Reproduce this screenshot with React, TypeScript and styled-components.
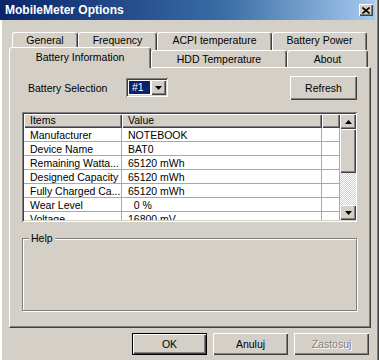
import styled, { createGlobalStyle, css } from "styled-components";

const GlobalStyle = createGlobalStyle`
  html, body {
    margin: 0;
    padding: 0;
    background: #d4d0c8;
  }
  body {
    font-family: "Liberation Sans", Arial, sans-serif;
    font-size: 10.5px;
    color: #000;
  }
  * {
    box-sizing: border-box;
  }
`;

const raised = css`
  background: #d4d0c8;
  box-shadow: inset 1px 1px #fff, inset -1px -1px #404040,
    inset -2px -2px #808080;
`;

const sunken = css`
  box-shadow: inset 1px 1px #808080, inset -1px -1px #fff,
    inset 2px 2px #404040, inset -2px -2px #d4d0c8;
`;

const Window = styled.div`
  width: 379px;
  height: 360px;
  overflow: hidden;
  display: flex;
  flex-direction: column;
  background: #d4d0c8;
  box-shadow: inset 2px 0 #fff, inset -1px 0 #404040, inset -2px 0 #808080;
`;

const TitleBar = styled.div`
  width: 375px;
  height: 20px;
  flex: none;
  display: flex;
  align-items: center;
  justify-content: space-between;
  padding: 0 2px 0 5px;
  background: linear-gradient(to right, #0a246a, #3a6ea5 60%, #a6caf0);
`;

const TitleText = styled.span`
  color: #fff;
  font-weight: bold;
  font-size: 12px;
`;

const CloseButton = styled.div`
  ${raised};
  width: 14px;
  height: 12px;
  display: flex;
  align-items: center;
  justify-content: center;
`;

const Body = styled.div`
  flex: 1;
  padding: 12px 8px 0 9px;
  display: flex;
  flex-direction: column;
`;

const TabRow = styled.div<{ $indent: number; $h: number }>`
  display: flex;
  align-items: flex-end;
  height: ${(p) => p.$h}px;
  padding-left: ${(p) => p.$indent}px;
`;

const Tab = styled.div<{ $w: number; $active?: boolean; $lift?: number }>`
  width: ${(p) => p.$w}px;
  height: 100%;
  flex: none;
  display: flex;
  align-items: center;
  justify-content: center;
  padding-bottom: ${(p) => p.$lift ?? 0}px;
  background: #d4d0c8;
  border-top: 1px solid #fff;
  border-left: 1px solid #fff;
  border-right: 1px solid #404040;
  border-radius: 3px 3px 0 0;
  box-shadow: inset -1px 0 #808080;
  white-space: nowrap;
  ${(p) =>
    p.$active &&
    css`
      height: 21px;
      margin-bottom: -1px;
      position: relative;
      z-index: 1;
      padding-bottom: 2px;
    `}
`;

const Page = styled.div`
  width: 362px;
  height: 261px;
  flex: none;
  border-top: 1px solid #fff;
  border-left: 1px solid #fff;
  border-right: 1px solid #404040;
  border-bottom: 1px solid #404040;
  box-shadow: inset -1px -1px #808080;
  padding: 8px 13px 0 12px;
  display: flex;
  flex-direction: column;
`;

const TopRow = styled.div`
  height: 24px;
  display: flex;
  align-items: center;
`;

const Label = styled.span`
  width: 104px;
  padding-left: 6px;
`;

const Combo = styled.div`
  ${sunken};
  background: #fff;
  width: 42px;
  height: 19px;
  padding: 2px;
  display: flex;
  margin-top: -1px;
`;

const ComboValue = styled.div`
  flex: 1;
  margin: 1px;
  background: #0a246a;
  color: #fff;
  padding-left: 3px;
  line-height: 13px;
`;

const ComboArrow = styled.div`
  ${raised};
  width: 15px;
  display: flex;
  align-items: center;
  justify-content: center;
`;

const Button = styled.div<{ $w: number; $h: number; $default?: boolean; $disabled?: boolean }>`
  ${raised};
  width: ${(p) => p.$w}px;
  height: ${(p) => p.$h}px;
  flex: none;
  display: flex;
  align-items: center;
  justify-content: center;
  ${(p) =>
    p.$default &&
    css`
      border: 1px solid #000;
    `}
  ${(p) =>
    p.$disabled &&
    css`
      color: #808080;
      text-shadow: 1px 1px #fff;
    `}
`;

const RefreshSpacer = styled.div`
  flex: 1;
`;

const List = styled.div`
  ${sunken};
  margin-top: 12px;
  height: 110px;
  padding: 2px 1px 2px 2px;
  display: flex;
  background: #fff;
`;

const Table = styled.div`
  flex: 1;
  overflow: hidden;
  display: flex;
  flex-direction: column;
`;

const HeadRow = styled.div`
  display: flex;
  height: 14px;
  flex: none;
`;

const HeadCell = styled.div<{ $w?: number }>`
  ${raised};
  ${(p) => (p.$w ? `width: ${p.$w}px; flex: none;` : "flex: 1;")}
  padding-left: 6px;
  line-height: 13px;
  white-space: nowrap;
`;

const Row = styled.div`
  display: flex;
  height: 14px;
  flex: none;
  border-bottom: 1px solid #a8a8a8;
`;

const Cell = styled.div<{ $w?: number }>`
  ${(p) => (p.$w ? `width: ${p.$w}px; flex: none;` : "flex: 1;")}
  border-right: 1px solid #a8a8a8;
  padding-left: 6px;
  line-height: 14px;
  white-space: pre;
  overflow: hidden;
`;

const Scrollbar = styled.div`
  width: 16px;
  flex: none;
  display: flex;
  flex-direction: column;
`;

const ScrollButton = styled.div`
  ${raised};
  height: 15px;
  flex: none;
  display: flex;
  align-items: center;
  justify-content: center;
`;

const Thumb = styled.div`
  ${raised};
  height: 44px;
  flex: none;
`;

const Track = styled.div`
  flex: 1;
  background: repeating-conic-gradient(#fff 0% 25%, #d4d0c8 0% 50%) 0 0 / 2px
    2px;
`;

const GroupBox = styled.div`
  position: relative;
  margin-top: 16px;
  height: 73px;
  border: 1px solid #808080;
  box-shadow: inset 1px 1px #fff, 1px 1px #fff;
`;

const GroupTitle = styled.span`
  position: absolute;
  top: -7px;
  left: 6px;
  padding: 0 2px;
  background: #d4d0c8;
  line-height: 13px;
`;

const ButtonBar = styled.div`
  display: flex;
  justify-content: flex-end;
  gap: 6px;
  margin-top: 5px;
  padding-right: 2px;
`;

const Triangle = ({ up }: { up?: boolean }) => (
  <svg width="7" height="4" viewBox="0 0 7 4">
    <polygon points={up ? "3.5,0 7,4 0,4" : "0,0 7,0 3.5,4"} fill="#000" />
  </svg>
);

const backTabs: [string, number][] = [
  ["General", 66],
  ["Frequency", 79],
  ["ACPI temperature", 115],
  ["Battery Power", 95],
];

const rows: [string, string][] = [
  ["Manufacturer", "NOTEBOOK"],
  ["Device Name", "BAT0"],
  ["Remaining Watta...", "65120 mWh"],
  ["Designed Capacity", "65120 mWh"],
  ["Fully Charged Ca...", "65120 mWh"],
  ["Wear Level", "  0 %"],
  ["Voltage", "16800 mV"],
];

export default function App() {
  return (
    <>
      <GlobalStyle />
      <Window>
        <TitleBar>
          <TitleText>MobileMeter Options</TitleText>
          <CloseButton>
            <svg width="8" height="7" viewBox="0 0 8 7">
              <path d="M0.5 0.5 L7.5 6.5 M7.5 0.5 L0.5 6.5" stroke="#000" strokeWidth="1.6" />
            </svg>
          </CloseButton>
        </TitleBar>
        <Body>
          <TabRow $indent={3} $h={18}>
            {backTabs.map(([name, w]) => (
              <Tab key={name} $w={w} $lift={3}>
                {name}
              </Tab>
            ))}
          </TabRow>
          <TabRow $indent={0} $h={17}>
            <Tab $w={142} $active>
              Battery Information
            </Tab>
            <Tab $w={136}>HDD Temperature</Tab>
            <Tab $w={81}>About</Tab>
          </TabRow>
          <Page>
            <TopRow>
              <Label>Battery Selection</Label>
              <Combo>
                <ComboValue>#1</ComboValue>
                <ComboArrow>
                  <Triangle />
                </ComboArrow>
              </Combo>
              <RefreshSpacer />
              <Button $w={67} $h={24}>
                Refresh
              </Button>
            </TopRow>
            <List>
              <Table>
                <HeadRow>
                  <HeadCell $w={98}>Items</HeadCell>
                  <HeadCell $w={200}>Value</HeadCell>
                  <HeadCell />
                </HeadRow>
                {rows.map(([k, v]) => (
                  <Row key={k}>
                    <Cell $w={98}>{k}</Cell>
                    <Cell $w={200}>{v}</Cell>
                    <Cell />
                  </Row>
                ))}
              </Table>
              <Scrollbar>
                <ScrollButton>
                  <Triangle up />
                </ScrollButton>
                <Thumb />
                <Track />
                <ScrollButton>
                  <Triangle />
                </ScrollButton>
              </Scrollbar>
            </List>
            <GroupBox>
              <GroupTitle>Help</GroupTitle>
            </GroupBox>
          </Page>
          <ButtonBar>
            <Button $w={75} $h={22} $default>
              OK
            </Button>
            <Button $w={75} $h={22}>
              Anuluj
            </Button>
            <Button $w={75} $h={22} $disabled>
              Zastosuj
            </Button>
          </ButtonBar>
        </Body>
      </Window>
    </>
  );
}
